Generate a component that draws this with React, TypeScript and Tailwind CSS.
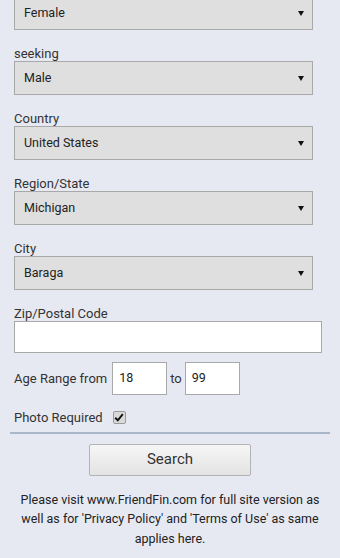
import React from "react";

const font = { fontFamily: "Roboto, 'Noto Sans', sans-serif" };

function Select({ value }: { value: string }) {
  return (
    <div className="flex h-[34px] w-[299px] items-center justify-between border border-[#a9a9a9] bg-[#dfdfdf] pl-[9px] pr-[8px] text-[12.5px] text-[#222]">
      <span>{value}</span>
      <svg width="6" height="5" viewBox="0 0 6 5">
        <path d="M0 0 L6 0 L3 5 Z" fill="#111" />
      </svg>
    </div>
  );
}

function Label({ children }: { children: React.ReactNode }) {
  return (
    <div className="mt-[17px] mb-[0px] text-[13px] leading-[14px] text-[#333]">{children}</div>
  );
}

export default function App() {
  return (
    <div style={font} className="h-[558px] w-[340px] overflow-hidden bg-[#e7e9f2]">
      <div className="-mt-[4px] px-[14px]">
        <Select value="Female" />
        <Label>seeking</Label>
        <Select value="Male" />
        <Label>Country</Label>
        <Select value="United States" />
        <Label>Region/State</Label>
        <Select value="Michigan" />
        <Label>City</Label>
        <Select value="Baraga" />
        <Label>Zip/Postal Code</Label>
        <div className="h-[32px] w-[308px] border border-[#a9a9a9] bg-white" />
        <div className="mt-[9px] flex items-center text-[13px] text-[#333]">
          <span>Age Range from</span>
          <div className="ml-[5px] flex h-[33px] w-[55px] items-center border border-[#a9a9a9] bg-white pl-[6px] text-[12.5px] text-[#222]">
            18
          </div>
          <span className="mx-[3px]">to</span>
          <div className="flex h-[33px] w-[55px] items-center border border-[#a9a9a9] bg-white pl-[6px] text-[12.5px] text-[#222]">
            99
          </div>
        </div>
        <div className="mt-[13px] flex items-center text-[13px] text-[#333]">
          <span>Photo Required</span>
          <div className="ml-[10px] flex h-[13px] w-[13px] items-center justify-center rounded-[2px] border border-[#9a9a9a] bg-[#d9d9d9]">
            <svg width="10" height="9" viewBox="0 0 10 9">
              <path d="M1.2 4.8 L3.8 7.3 L8.8 1.2" stroke="#111" strokeWidth="1.9" fill="none" />
            </svg>
          </div>
        </div>
      </div>
      <div className="mx-[10px] mt-[4px] h-[2px] bg-[#aab5ca]" />
      <div className="mt-[10px] flex justify-center">
        <div className="flex h-[32px] w-[162px] items-center justify-center rounded-[2px] border border-[#b3b3b3] bg-gradient-to-b from-[#f6f6f6] to-[#e3e3e3] text-[15px] text-[#333]">
          Search
        </div>
      </div>
      <p className="mx-auto mt-[14px] w-[318px] text-center text-[12.5px] leading-[19.5px] text-[#222]">
        Please visit www.FriendFin.com for full site version as well as for 'Privacy Policy' and 'Terms of Use' as same applies here.
      </p>
    </div>
  );
}
